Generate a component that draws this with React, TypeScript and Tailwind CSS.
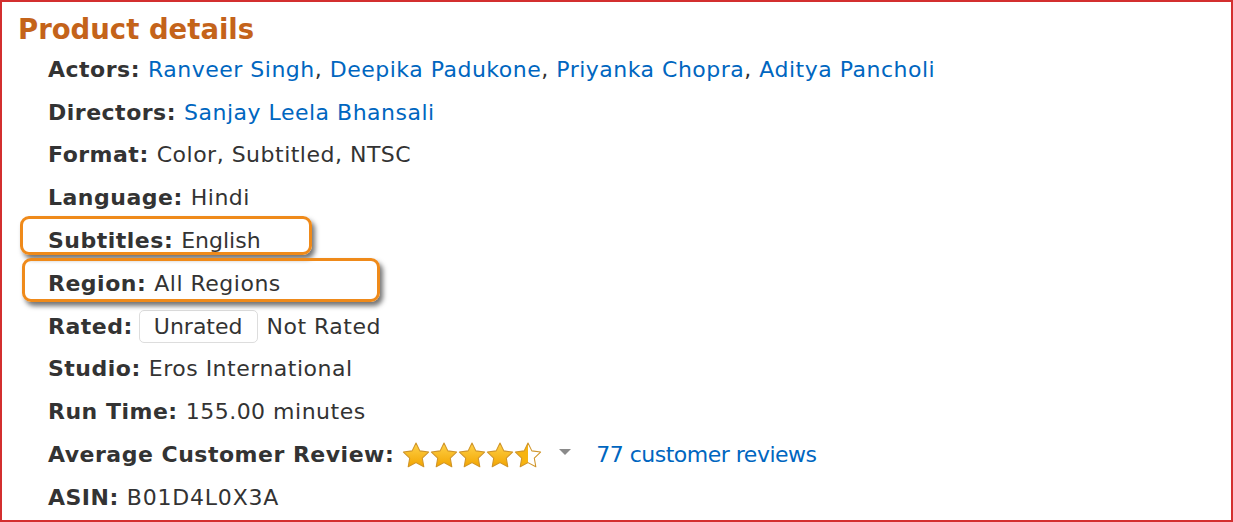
import React from "react";

const Star = ({ fill }: { fill: "full" | "half" }) => (
  <svg width="28" height="26" viewBox="0 0 24 22.3">
    <defs>
      <linearGradient id="sg" x1="0" y1="0" x2="0" y2="1">
        <stop offset="0" stopColor="#ffd24a" />
        <stop offset="1" stopColor="#f2a500" />
      </linearGradient>
      <linearGradient id="hg" x1="0" y1="0" x2="1" y2="0">
        <stop offset="0.5" stopColor="#f7b411" />
        <stop offset="0.5" stopColor="#ffffff" />
      </linearGradient>
    </defs>
    <path
      d="M12 0.8l3.3 6.8 7.5 1-5.4 5.2 1.3 7.4L12 17.7l-6.7 3.5 1.3-7.4-5.4-5.2 7.5-1z"
      fill={fill === "full" ? "url(#sg)" : "url(#hg)"}
      stroke="#cf9428"
      strokeWidth="0.9"
      strokeLinejoin="round"
    />
  </svg>
);

const Row = ({ label, children }: { label: string; children: React.ReactNode }) => (
  <div className="h-[42.8px] flex items-center whitespace-nowrap">
    <span className="font-bold">{label}:</span>
    <span className="ml-[8px] flex items-center">{children}</span>
  </div>
);

const A = ({ children }: { children: React.ReactNode }) => (
  <span className="text-[#0066c0]">{children}</span>
);

export default function App() {
  return (
    <div
      className="w-[1233px] h-[522px] bg-white border-2 border-[#d32f2f] overflow-hidden text-[#333333] text-[22px] tracking-[0.5px]"
      style={{ fontFamily: "Verdana, 'DejaVu Sans', sans-serif" }}
    >
      <div className="pl-[16px] pt-[9px]">
        <div className="text-[27.5px] font-bold text-[#c4631a] leading-[36px] tracking-[0px]">Product details</div>
        <div className="pl-[30px] mt-[1px]">
          <Row label="Actors">
            <A>Ranveer Singh</A>,&nbsp;<A>Deepika Padukone</A>,&nbsp;<A>Priyanka Chopra</A>,&nbsp;
            <A>Aditya Pancholi</A>
          </Row>
          <Row label="Directors">
            <A>Sanjay Leela Bhansali</A>
          </Row>
          <Row label="Format">Color, Subtitled, NTSC</Row>
          <Row label="Language">Hindi</Row>
          <div className="relative">
            <div className="absolute left-[-28px] top-[-3px] w-[292px] h-[39px] rounded-[9px] border-[3px] border-[#ef8a1a] shadow-[3px_4px_5px_rgba(0,0,0,0.55)]" />
            <Row label="Subtitles">
              <span className="tracking-[0px]">English</span>
            </Row>
          </div>
          <div className="relative">
            <div className="absolute left-[-26px] top-[-4px] w-[358px] h-[44px] rounded-[9px] border-[3px] border-[#ef8a1a] shadow-[3px_4px_5px_rgba(0,0,0,0.55)]" />
            <Row label="Region">All Regions</Row>
          </div>
          <Row label="Rated">
            <span className="ml-[-2px] border border-[#dddddd] rounded-[5px] px-[14px] h-[33px] flex items-center tracking-[0px]">
              Unrated
            </span>
            <span className="ml-[9px]">Not Rated</span>
          </Row>
          <Row label="Studio">Eros International</Row>
          <Row label="Run Time">155.00 minutes</Row>
          <Row label="Average Customer Review">
            <span className="flex items-center">
              <Star fill="full" />
              <Star fill="full" />
              <Star fill="full" />
              <Star fill="full" />
              <Star fill="half" />
            </span>
            <svg className="ml-[17px] mt-[-4px]" width="12" height="7" viewBox="0 0 12 7">
              <path d="M0 0h12L6 6z" fill="#8a8a8a" />
            </svg>
            <span className="ml-[25px] text-[#0066c0] tracking-[-0.5px]">77 customer reviews</span>
          </Row>
          <Row label="ASIN">
            <span className="tracking-[0.8px]">B01D4L0X3A</span>
          </Row>
        </div>
      </div>
    </div>
  );
}
